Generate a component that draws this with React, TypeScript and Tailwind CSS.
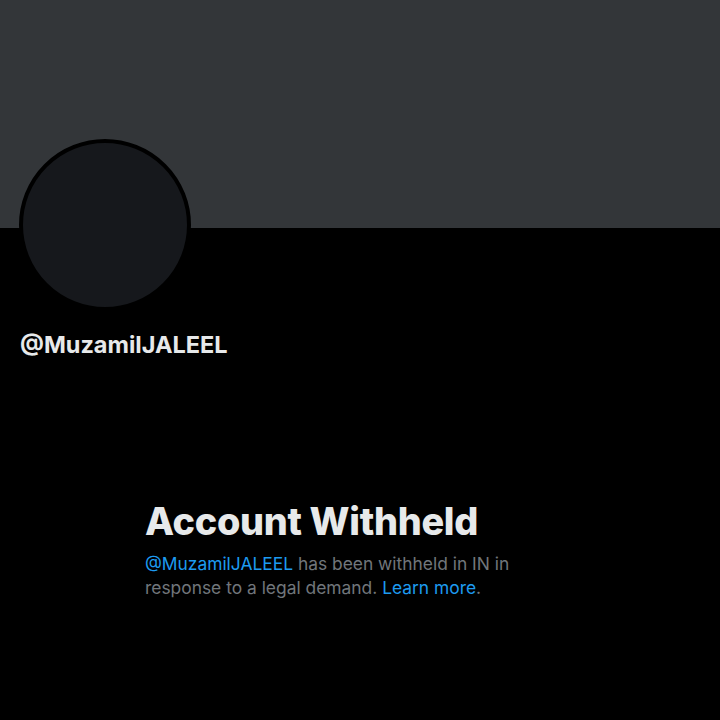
export default function App() {
  return (
    <div className="w-[720px] h-[720px] bg-black overflow-hidden" style={{ fontFamily: 'Inter, "Liberation Sans", sans-serif' }}>
      <div className="h-[228px] bg-[#333639]" />
      <div className="ml-[19px] -mt-[89px] w-[172px] h-[172px] rounded-full border-[4px] border-black bg-[#16181c]" />
      <div className="ml-[20px] mt-[20px] text-[23.5px] leading-[28px] font-bold text-[#e7e9ea]">@MuzamilJALEEL</div>
      <div className="ml-[145px] mt-[140px] w-[400px]">
        <div className="text-[37.8px] leading-[44px] font-extrabold text-[#e7e9ea] tracking-[-0.3px]">Account Withheld</div>
        <div className="mt-[9px] text-[17.4px] leading-[24px] text-[#71767b]">
          <span className="text-[#1d9bf0]">@MuzamilJALEEL</span> has been withheld in IN in response to a legal demand. <span className="text-[#1d9bf0]">Learn more</span>.
        </div>
      </div>
    </div>
  );
}
